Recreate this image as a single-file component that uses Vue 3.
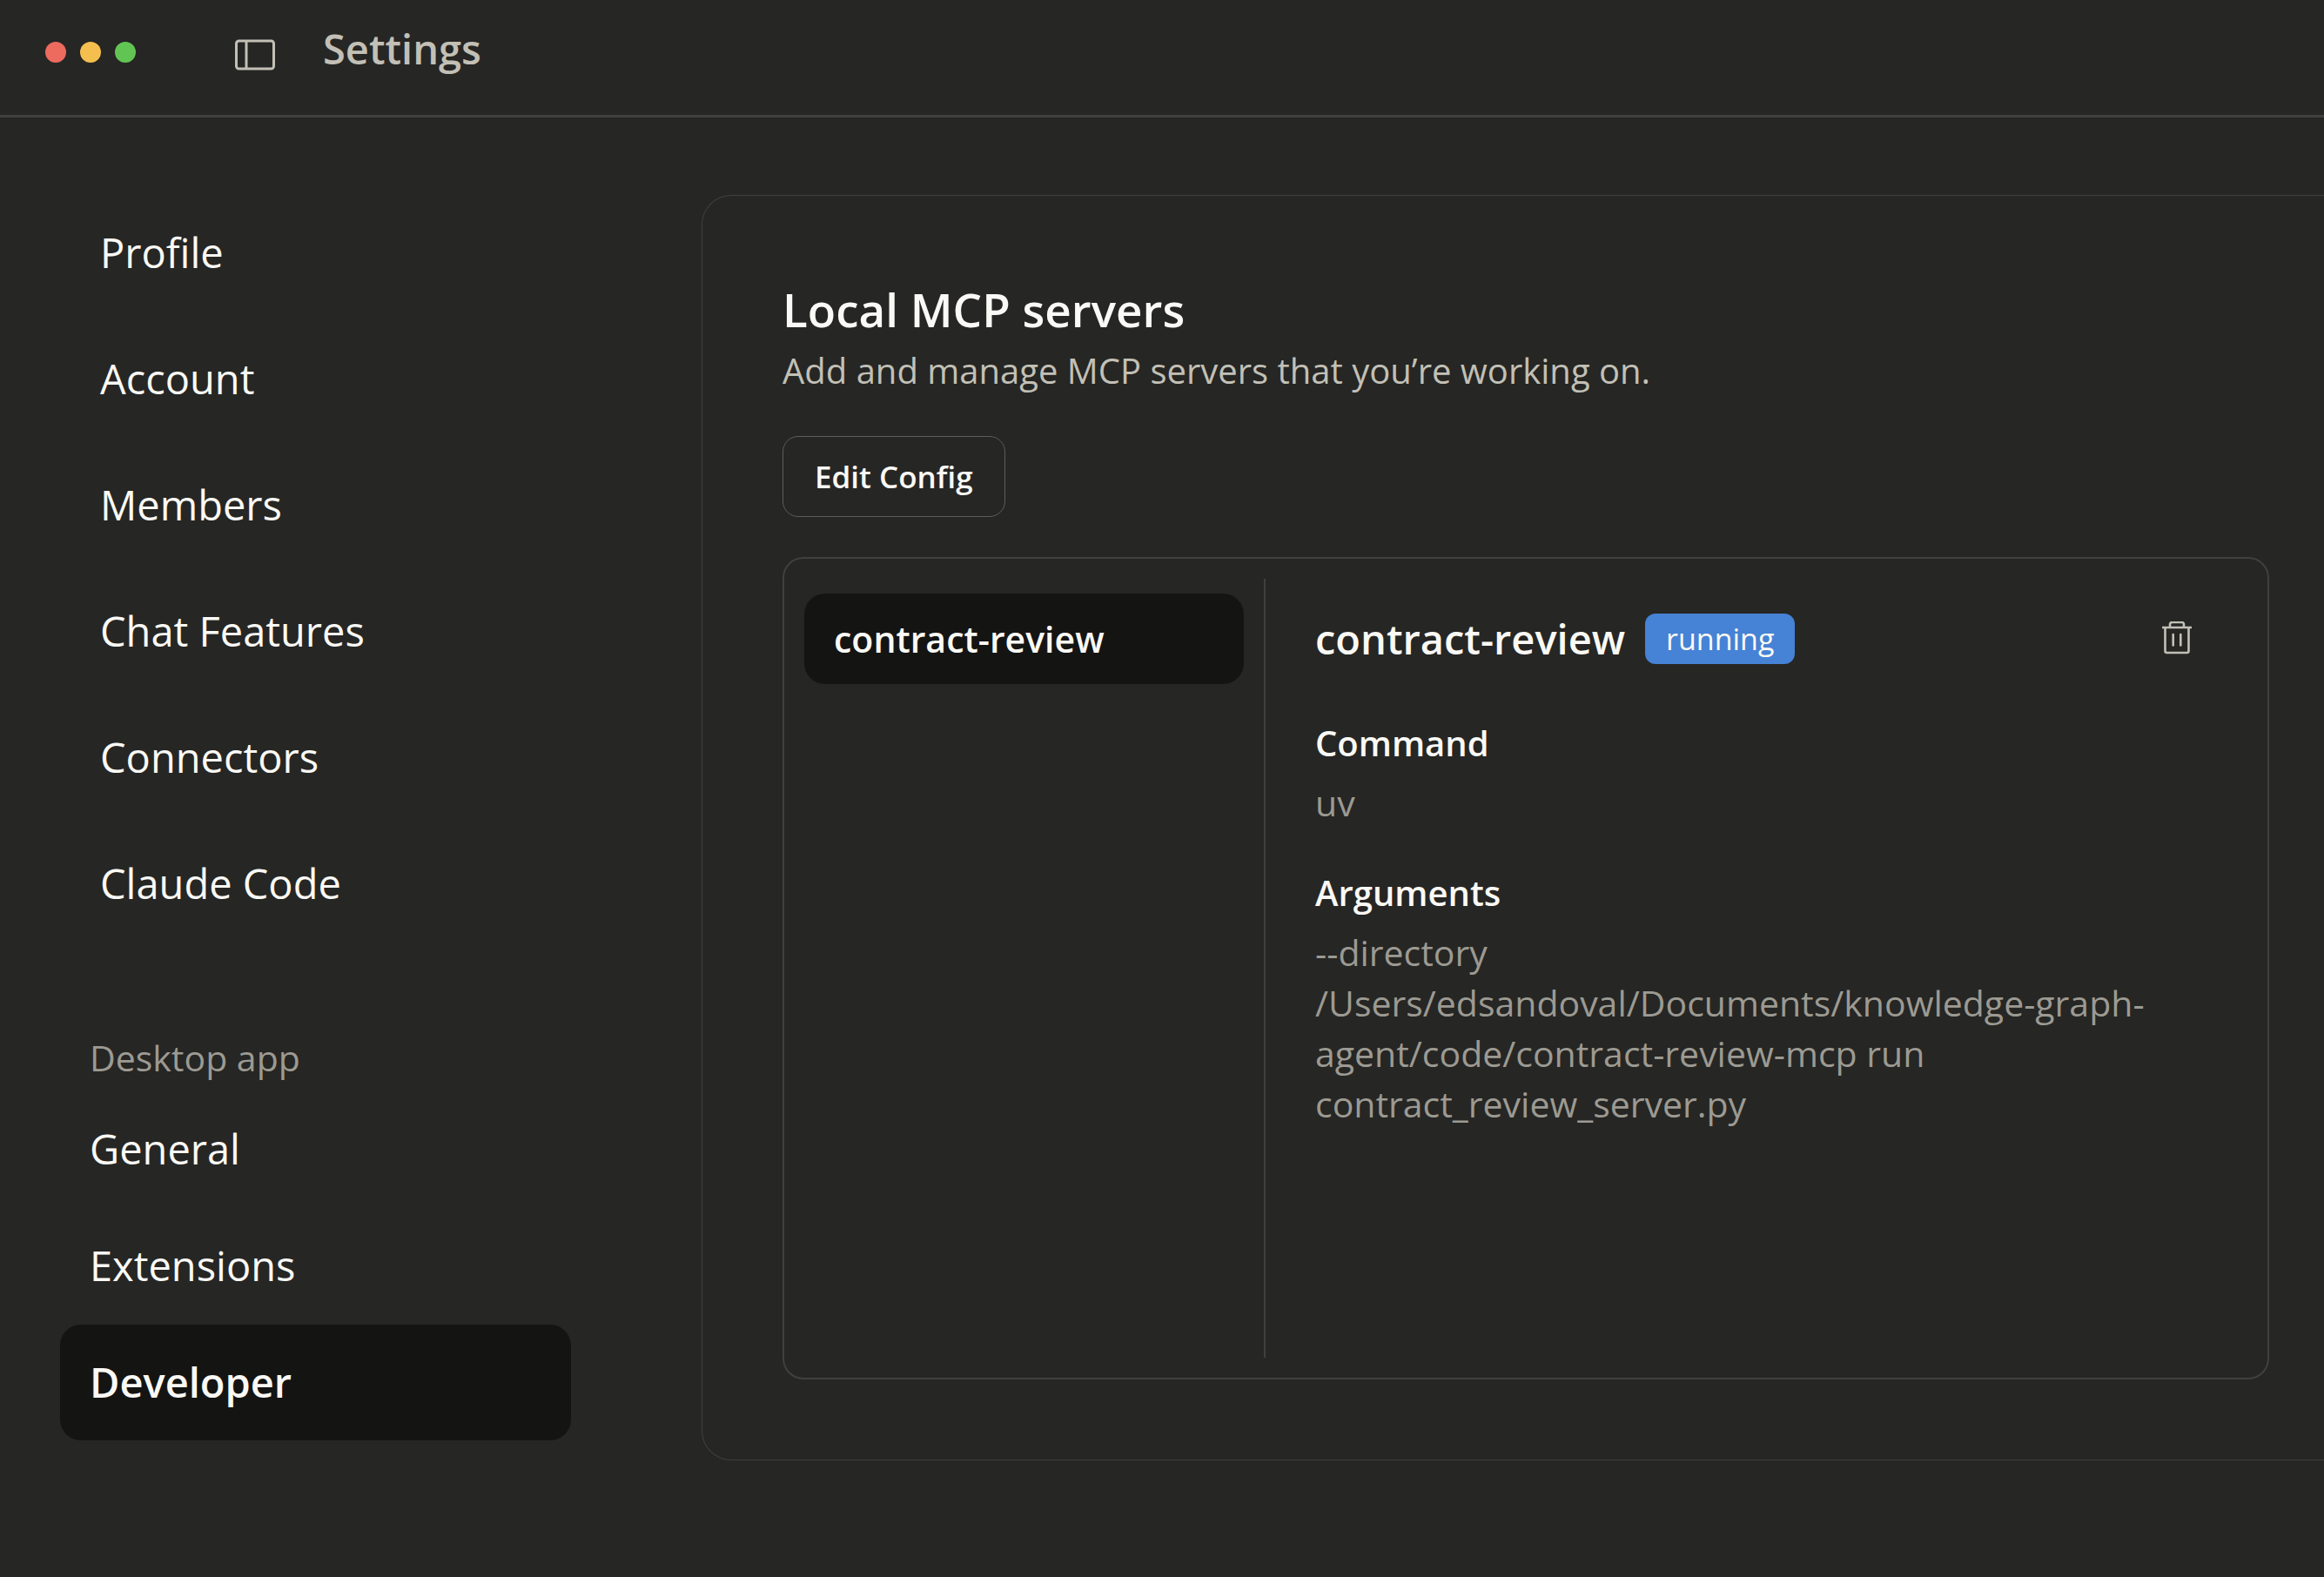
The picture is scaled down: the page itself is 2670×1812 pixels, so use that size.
<script setup>
import { ref } from 'vue'

const accountLinks = ['Profile', 'Account', 'Members', 'Chat Features', 'Connectors', 'Claude Code']
const desktopLinks = ['General', 'Extensions', 'Developer']
const current = ref('Developer')

const server = {
  name: 'contract-review',
  status: 'running',
  command: 'uv',
  args: '--directory /Users/edsandoval/Documents/knowledge-graph-agent/code/contract-review-mcp run contract_review_server.py',
}
</script>

<template>
  <div class="window">
    <header class="titlebar">
      <div class="lights">
        <span class="light close"></span>
        <span class="light minimize"></span>
        <span class="light zoom"></span>
      </div>
      <button class="icon-button toggle" type="button" aria-label="Toggle sidebar">
        <svg width="48" height="36" viewBox="0 0 48 36" fill="none" stroke="currentColor" stroke-width="3">
          <rect x="2.5" y="2" width="43" height="32" rx="3" />
          <path d="M14 2v32" />
        </svg>
      </button>
      <h1 class="window-title">Settings</h1>
    </header>

    <div class="body">
      <nav class="sidebar" aria-label="Settings sections">
        <a v-for="link in accountLinks" :key="link" class="account-link" href="#">{{ link }}</a>
        <h2 class="group-label">Desktop app</h2>
        <div class="desktop-group">
          <a
            v-for="link in desktopLinks"
            :key="link"
            class="desktop-link"
            :class="{ active: link === current }"
            href="#"
            @click.prevent="current = link"
          >{{ link }}</a>
        </div>
      </nav>

      <main class="card">
        <h2 class="card-title">Local MCP servers</h2>
        <p class="card-text">Add and manage MCP servers that you’re working on.</p>
        <button class="edit" type="button">Edit Config</button>

        <section class="panel">
          <div class="server-list">
            <button class="server-item" type="button">{{ server.name }}</button>
          </div>
          <div class="details">
            <div class="details-head">
              <h3 class="server-name">{{ server.name }}</h3>
              <span class="badge">{{ server.status }}</span>
              <button class="icon-button remove" type="button" aria-label="Remove server">
                <svg width="36" height="40" viewBox="0 0 36 40" fill="none" stroke="currentColor" stroke-width="2.6">
                  <path d="M1 7h34" />
                  <path d="M10 7V3.500a2.500 2.500 0 0 1 2.500-2.500h11a2.500 2.500 0 0 1 2.500 2.500V7" />
                  <path d="M4.500 7v27a2 2 0 0 0 2 2h23a2 2 0 0 0 2-2V7" />
                  <path d="M13.700 15v12.500M22.300 15v12.500" stroke-linecap="round" />
                </svg>
              </button>
            </div>
            <dl class="fields">
              <div class="field">
                <dt>Command</dt>
                <dd>{{ server.command }}</dd>
              </div>
              <div class="field">
                <dt>Arguments</dt>
                <dd>{{ server.args }}</dd>
              </div>
            </dl>
          </div>
        </section>
      </main>
    </div>
  </div>
</template>

<style>
body {
  margin: 0;
  background: #262624;
}
</style>

<style scoped>
.window {
  box-sizing: border-box;
  min-height: 100vh;
  overflow: hidden;
  background: #262624;
  color: #faf9f5;
  font-family: "Open Sans", "Noto Sans", sans-serif;
  font-size: 41px;
  line-height: 58px;
}

h1,
h2,
h3,
p,
dl,
dd {
  margin: 0;
}

a {
  color: inherit;
  text-decoration: none;
}

button {
  box-sizing: border-box;
  margin: 0;
  border: 0;
  background: none;
  color: inherit;
  font: inherit;
  cursor: pointer;
}

.icon-button {
  display: flex;
  padding: 0;
  color: #c2c0b6;
}

.titlebar {
  display: flex;
  align-items: center;
  height: 120px;
  padding: 0 52px 12px;
  border-bottom: 3px solid #40403e;
}

.lights {
  display: flex;
  gap: 16px;
}

.light {
  width: 24px;
  height: 24px;
  border-radius: 50%;
}

.close {
  background: #ec6a5e;
}

.minimize {
  background: #f5bf4f;
}

.zoom {
  background: #61c554;
}

.toggle {
  margin-left: 113px;
  padding-top: 5px;
}

.window-title {
  margin-left: 54px;
  padding-bottom: 8px;
  color: #c2c0b6;
  font-size: 47px;
  font-weight: 600;
}

.body {
  display: flex;
  align-items: flex-start;
}

.sidebar {
  display: flex;
  flex: none;
  flex-direction: column;
  box-sizing: border-box;
  width: 806px;
  padding: 83px 150px 0 69px;
  font-size: 47px;
}

.account-link {
  padding-left: 46px;
  line-height: 145px;
}

.group-label {
  margin: 98px 0 10px;
  padding-left: 34px;
  color: #9c9a92;
  font-size: 41px;
  font-weight: 400;
}

.desktop-group {
  display: flex;
  flex-direction: column;
  gap: 1px;
}

.desktop-link {
  padding-left: 34px;
  border-radius: 24px;
  line-height: 133px;
}

.desktop-link.active {
  background: #141413;
  font-weight: 600;
}

.card {
  flex: 1;
  min-width: 0;
  margin-top: 89px;
  padding: 95px 63px 92px 92px;
  border: solid #40403e;
  border-width: 1px 0 1px 1px;
  border-radius: 34px 0 0 34px;
}

.card-title {
  font-size: 53px;
  font-weight: 600;
  line-height: 72px;
}

.card-text {
  padding-top: 5px;
  color: #c2c0b6;
  font-size: 40px;
}

.edit {
  display: block;
  height: 93px;
  margin-top: 46px;
  padding: 0 36px;
  border: 1px solid #5e5d5a;
  border-radius: 18px;
  font-size: 35px;
  font-weight: 600;
}

.panel {
  display: flex;
  box-sizing: border-box;
  min-height: 945px;
  margin-top: 46px;
  padding: 23px;
  border: 2px solid #40403e;
  border-radius: 24px;
}

.server-list {
  flex: none;
  box-sizing: border-box;
  width: 530px;
  padding: 17px 23px 0 0;
  border-right: 2px solid #40403e;
}

.server-item {
  width: 100%;
  height: 104px;
  padding: 0 34px;
  border-radius: 24px;
  background: #141413;
  font-weight: 600;
  text-align: left;
}

.details {
  flex: 1;
  min-width: 0;
  padding: 40px 63px 0 57px;
}

.details-head {
  display: flex;
  align-items: center;
  height: 58px;
}

.server-name {
  font-size: 47px;
  font-weight: 600;
}

.badge {
  margin-left: 23px;
  padding: 0 24px;
  border-radius: 12px;
  background: #4682d5;
  font-size: 34px;
}

.remove {
  margin-left: auto;
}

.fields {
  display: flex;
  flex-direction: column;
  gap: 46px;
  margin-top: 62px;
}

.field {
  display: flex;
  flex-direction: column;
  gap: 10px;
}

dt {
  font-size: 40px;
  font-weight: 600;
}

dd {
  color: #9c9a92;
}
</style>
